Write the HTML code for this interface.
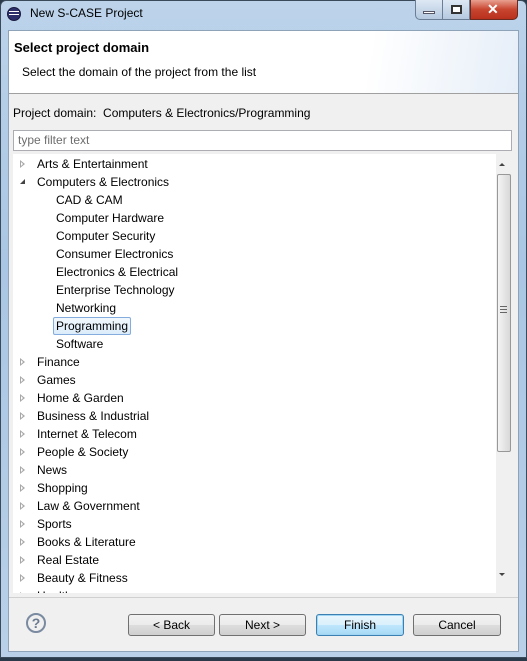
<!DOCTYPE html>
<html><head><style>
*{margin:0;padding:0;box-sizing:border-box}
body{width:527px;height:661px;overflow:hidden;background:#2b3a4a;font-family:"Liberation Sans",sans-serif;font-size:12px;color:#000;position:relative}
.frame{position:absolute;left:0;top:0;width:527px;height:658px;background:linear-gradient(180deg,#bcd3ea 0%,#a9c6e4 40%,#b9d0e8 100%);border:1px solid #3b4a5a;border-radius:6px 6px 0 0}
.abs{position:absolute}
.client{position:absolute;left:8px;top:30px;width:511px;height:622px;background:#f0f0f0;border:1px solid #8ea2b8}
.hdr{position:absolute;left:0;top:0;width:509px;height:63px;background:linear-gradient(100deg,#fff 70%,#e6eef8 100%);border-bottom:1px solid #a0a0a0}
.btn{position:absolute;top:583px;height:22px;border:1px solid #707070;border-radius:3px;background:linear-gradient(#f2f2f2,#ebebeb 50%,#dddddd 51%,#cfcfcf);text-align:center;line-height:20px;font-size:12px}
.row{position:absolute;height:18px;line-height:18px;white-space:nowrap}
</style></head><body>
<div class="frame"></div>
<div class="abs" style="left:7px;top:7px;width:14px;height:14px;border-radius:50%;background:#2c2f6a;border:1px solid #1a1a40"></div>
<div class="abs" style="left:9px;top:11px;width:10px;height:1px;background:#fff"></div>
<div class="abs" style="left:9px;top:14px;width:10px;height:1px;background:#fff"></div>
<div class="abs" style="left:30px;top:6px;font-size:12px">New S-CASE Project</div>
<div class="abs" style="left:415px;top:0;width:28px;height:20px;border:1px solid #6a7f96;border-top:none;border-radius:0 0 0 5px;background:linear-gradient(#dde8f4,#b5c9df)"></div>
<div class="abs" style="left:423px;top:11px;width:12px;height:3px;background:#fff;border:1px solid #556"></div>
<div class="abs" style="left:443px;top:0;width:27px;height:20px;border:1px solid #6a7f96;border-top:none;border-left:none;background:linear-gradient(#dde8f4,#b5c9df)"></div>
<div class="abs" style="left:451px;top:5px;width:11px;height:9px;border:2px solid #333;background:#fff"></div>
<div class="abs" style="left:470px;top:0;width:48px;height:20px;border:1px solid #6a2a20;border-top:none;border-radius:0 0 5px 0;background:linear-gradient(#e8a090,#c8452f 50%,#b8301c)"></div>
<div class="abs" style="left:487px;top:1px;color:#fff;font-weight:bold;font-size:14px">✕</div>
<div class="client">
 <div class="hdr">
  <div class="abs" style="left:5px;top:9px;font-weight:bold;font-size:13px">Select project domain</div>
  <div class="abs" style="left:13px;top:34px">Select the domain of the project from the list</div>
 </div>
 <div class="abs" style="left:4px;top:75px">Project domain:&nbsp; Computers &amp; Electronics/Programming</div>
 <div class="abs" style="left:4px;top:99px;width:499px;height:21px;background:#fff;border:1px solid #abadb3;color:#6d6d6d;padding-left:4px;line-height:19px">type filter text</div>
 <div class="abs" style="left:4px;top:123px;width:499px;height:439px;background:#fff;overflow:hidden">
  <div class="abs" style="left:483px;top:0;width:16px;height:439px;background:#f0f0f0"></div>
  <div class="abs" style="left:486px;top:9px;border-left:3px solid transparent;border-right:3px solid transparent;border-bottom:3px solid #444"></div>
  <div class="abs" style="left:484px;top:20px;width:14px;height:278px;border:1px solid #989898;border-radius:2px;background:linear-gradient(90deg,#f4f4f4,#d8d8d8)"></div>
  <div class="abs" style="left:487px;top:152px;width:7px;height:7px;border-top:1px solid #666;border-bottom:1px solid #666"><div style="margin-top:2px;border-top:1px solid #666"></div></div>
  <div class="abs" style="left:486px;top:419px;border-left:3px solid transparent;border-right:3px solid transparent;border-top:3px solid #444"></div>
  <div id="t"></div>
 </div>
 <div class="abs" style="left:0;top:566px;width:509px;height:1px;background:#d0d0d0"></div>
 <div class="abs" style="left:17px;top:582px;width:20px;height:20px;border:2px solid #7a8aa0;border-radius:50%;text-align:center;line-height:16px;font-weight:bold;color:#6a7a90;font-size:14px">?</div>
 <div class="btn" style="left:119px;width:87px">&lt; Back</div>
 <div class="btn" style="left:210px;width:87px">Next &gt;</div>
 <div class="btn" style="left:307px;width:88px;border-color:#3c7fb1;background:linear-gradient(#eaf6fd,#d9f0fc 50%,#bee6fd 51%,#a7d9f5);box-shadow:inset 0 0 0 1px #9fd6f3">Finish</div>
 <div class="btn" style="left:404px;width:88px">Cancel</div>
</div>
<script>
var items=[[0,"Arts & Entertainment",1],[0,"Computers & Electronics",2],[1,"CAD & CAM"],[1,"Computer Hardware"],[1,"Computer Security"],[1,"Consumer Electronics"],[1,"Electronics & Electrical"],[1,"Enterprise Technology"],[1,"Networking"],[1,"Programming",0,1],[1,"Software"],[0,"Finance",1],[0,"Games",1],[0,"Home & Garden",1],[0,"Business & Industrial",1],[0,"Internet & Telecom",1],[0,"People & Society",1],[0,"News",1],[0,"Shopping",1],[0,"Law & Government",1],[0,"Sports",1],[0,"Books & Literature",1],[0,"Real Estate",1],[0,"Beauty & Fitness",1],[0,"Health",1]];
var h="";items.forEach(function(it,i){var top=i*18+1;var x=it[0]?43:24;
if(it[2]==1)h+='<div class="abs" style="left:7px;top:'+(top+5)+'px;border-top:4px solid transparent;border-bottom:4px solid transparent;border-left:5px solid #a8a8a8"></div><div class="abs" style="left:8px;top:'+(top+7)+'px;border-top:2px solid transparent;border-bottom:2px solid transparent;border-left:2px solid #fff"></div>';
if(it[2]==2)h+='<div class="abs" style="left:7px;top:'+(top+6)+'px;border-left:5px solid transparent;border-bottom:5px solid #444"></div>';
var sel=it[3]?'background:linear-gradient(#f2f8fd,#dcecfa);border:1px solid #84acdd;border-radius:2px;padding:0 2px;line-height:16px;left:'+(x-3)+'px;':'left:'+x+'px;';
h+='<div class="row" style="top:'+top+'px;'+sel+'">'+it[1].replace(/&/g,"&amp;")+'</div>';});
document.getElementById("t").innerHTML=h;
</script>
</body></html>
